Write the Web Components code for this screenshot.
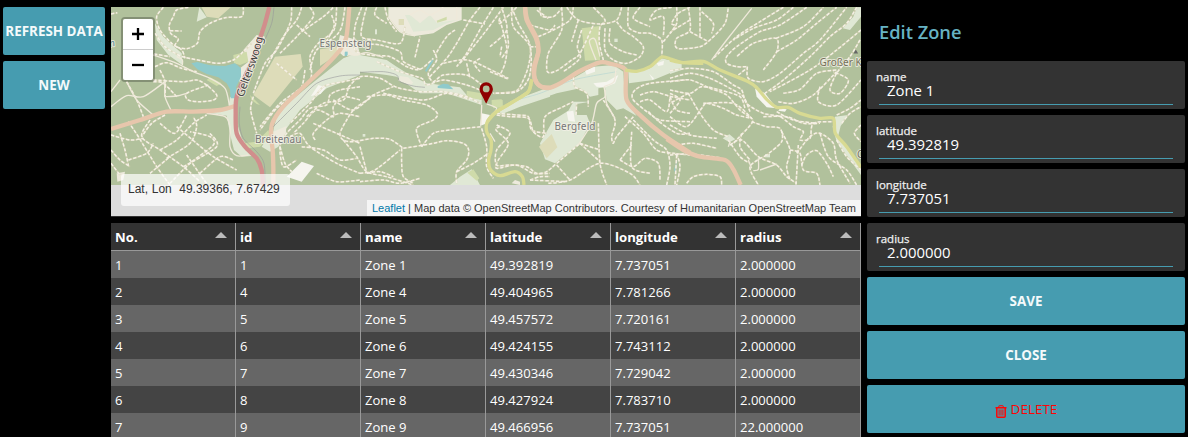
<!DOCTYPE html>
<html lang="en">
<head>
<meta charset="utf-8">
<title>Edit Zone</title>
<style>
html,body{margin:0;height:100%;background:#000;overflow:hidden}
body{font-family:"Open Sans","Noto Sans",sans-serif;color:#fff}
</style>
</head>
<body>
<zone-app></zone-app>
<script>
const define = (name, html, setup) => customElements.define(name, class extends HTMLElement {
  connectedCallback() {
    if (this.shadowRoot) return;
    const t = document.createElement('template');
    t.innerHTML = typeof html === 'function' ? html(this) : html;
    this.attachShadow({mode: 'open'}).append(t.content.cloneNode(true));
    if (setup) setup(this);
  }
});

define('action-button', `<style>
:host{display:block;height:48px}
button{display:flex;align-items:center;justify-content:center;width:100%;height:100%;border:0;padding:0;border-radius:2px;background:#469cb0;color:#f4fafb;font:700 13.4px "Open Sans",sans-serif;white-space:nowrap}
:host([danger]) button{color:#ff0505;font-weight:400;font-size:13.5px}
::slotted(svg){margin:4px 4px 0 0}
</style><button><slot></slot></button>`);

define('form-field', el => `<style>
:host{display:flex;flex-direction:column;box-sizing:border-box;height:48px;background:#333;border-radius:2px;padding:8px 12px 0 9px}
label{font-size:11.5px;line-height:16px;height:13px;color:#f0f0f0;-webkit-text-stroke:.25px #f0f0f0}
.v{margin-left:3px;padding-left:8px;height:22px;line-height:16px;font-size:14.9px;border-bottom:1px solid #469cb0}
</style><label>${el.getAttribute('label')}</label><div class="v">${el.getAttribute('value')}</div>`);

define('form-title', `<style>
:host{display:flex;align-items:center;height:48px;padding-left:12px;font-size:18.3px;font-weight:600;color:#67b3c4}
</style><slot></slot>`);

const ROWS = [
 [1,1,'Zone 1','49.392819','7.737051','2.000000'],[2,4,'Zone 4','49.404965','7.781266','2.000000'],
 [3,5,'Zone 5','49.457572','7.720161','2.000000'],[4,6,'Zone 6','49.424155','7.743112','2.000000'],
 [5,7,'Zone 7','49.430346','7.729042','2.000000'],[6,8,'Zone 8','49.427924','7.783710','2.000000'],
 [7,9,'Zone 9','49.466956','7.737051','22.000000']];
const COLS = ['No.','id','name','latitude','longitude','radius'];

define('zone-table', () => `<style>
:host{display:block}
.r{display:grid;grid-template-columns:repeat(6,125px);height:27px;background:#666}
.r:nth-child(even){background:#444}
.r.h{background:#333;border-bottom:1px solid #999}
.r div{display:flex;align-items:center;justify-content:space-between;border-right:1px solid #999;padding:2px 7px 0 4px;font-size:13.05px;line-height:25px}
.h div{font-weight:700;font-size:13.2px}
i{border:6px solid transparent;border-top:0;border-bottom:6px solid #bbb;margin:-5px 1px 0 0}
</style><div class="r h">${COLS.map(c => `<div>${c}<i></i></div>`).join('')}</div>` +
 ROWS.map(r => `<div class="r">${r.map(c => `<div>${c}</div>`).join('')}</div>`).join(''));

/* Map geometry: one layer per tile column, in thirds of a pixel from the tile origin. */
const curve = p => {
  const n = p.length / 2, at = i => { i = Math.max(0, Math.min(n - 1, i)); return [p[2*i], p[2*i+1]]; };
  let d = `M${p[0]} ${p[1]}`;
  for (let i = 0; i < n - 1; i++) {
    const [a,b,c,e] = [at(i-1), at(i), at(i+1), at(i+2)];
    d += `C${b[0]+(c[0]-a[0])/7} ${b[1]+(c[1]-a[1])/7} ${c[0]-(e[0]-b[0])/7} ${c[1]-(e[1]-b[1])/7} ${c[0]} ${c[1]}`;
  }
  return d;
};
const TILES = [
 {x:110, areas:[
  ['l','M268,22L290,52L260,65Z'],['b','M275,22L362,22L325,55L290,50Z'],['b','M495,170L572,162L578,200L480,322L430,285Z'],
  ['b','M630,148L690,140L680,165L630,198Z'],
  ['l','M750,155L700,175L600,255L540,305L500,350L488,400L530,385L570,330L620,290L650,265L750,225Z'],
  ['l','M290,337L350,347L362,410L372,450L395,470L435,467L395,415L375,350L378,295L360,290L355,325Z'],
  ['l','M135,70L160,110L215,160L217,195L175,165L140,120Z'],
  ['r','M440,105L400,150L415,185L390,205L390,270L430,200L465,110Z'],['g','M370,165L410,155L415,185L390,195L372,190Z'],['g','M300,232L335,250L320,258L290,240Z'],
  ['g','M400,430L440,425L475,390L480,405L450,440L410,445Z'],['l','M455,440L480,400L525,380L530,400L505,440L480,455Z'],['r','M490,395L530,378L525,415L505,435L488,430Z'],
  ['w','M575,485L612,498L575,545L530,530Z'],['w','M603,288L625,255L648,262L632,282Z'],['r','M20,520L45,515L40,540L22,545Z'],['g','M420,285L450,315L440,312L425,300Z'],['r','M690,105L740,120L750,165L700,168L680,150Z'],
  ['a','M244,190L262,186L300,196L345,198L375,190L393,205L393,230L378,262L380,295L362,295L360,268L350,250L325,232L290,222L262,208Z'],['a','M705,155h8v10h-8z']],
  paths:[[3,42,22,38],[160,22,140,50,150,90,185,130,215,150,225,175],[235,22,200,30,190,50,178,75,182,100,205,117,195,138,230,146,262,130,270,95,300,70,345,53,395,50,400,22],[180,92,215,93],
  [135,100,165,140,205,165,225,172,290,185,330,190,370,180,400,155,425,130],[132,162,180,170],[135,200,170,188,215,205,260,215],
  [150,210,165,245,165,290],[130,240,220,245,260,240,290,255,320,285,310,300,270,305,235,300,230,280,295,255],[50,245,80,300,100,350],[130,245,160,250,200,290],
  [3,450,30,480,60,500],[30,400,45,450,55,495],[55,365,85,410,140,500,180,555],[120,360,95,410,150,450,220,500,270,545],[165,345,125,370,95,410],[3,405,60,420,100,415],[55,480,110,460,130,430],[150,450,200,420,250,370,290,345],[170,475,240,430,260,380,250,350],[200,380,260,430,310,470,380,510],[120,520,180,470],[180,550,240,490,310,435,300,410,240,395],[220,500,320,440,300,400],[150,370,195,400,230,345],[230,465,275,530,290,550],[270,520,330,470,370,480],[3,490,30,525],
  [545,22,540,70,500,150,465,190,430,280],[575,22,560,60,520,110,470,200],[600,22,610,50,560,110,510,160],[560,75,600,110],[575,95,640,50,670,22],[680,22,672,90,625,130,600,170,600,240,510,310,450,380],[705,22,695,80,675,110,620,150,600,210],[430,290,422,330,440,400],[500,190,560,240],[585,210,570,270,500,325,450,390],[665,45,672,80,640,140],
  [750,260,690,270,660,285,650,315,600,325,570,360,530,400,510,440,520,500,560,480],[750,235,700,245,640,260,600,310,540,370],[750,300,700,290,670,320,670,350,620,330,580,370,550,400],[610,370,680,400,750,430],[615,420,610,400,650,360,690,340,750,350],[540,410,570,400,600,440,680,490,750,520],[510,440,525,490,545,515],[620,520,680,545,750,540],[575,440,640,450,690,480,740,475]],
  solid:[[3,320,50,287,100,290,165,245],[3,275,30,240],[165,290,200,288,230,280],[50,245,80,300,130,345],[165,245,165,290,185,335],[130,165,200,190,250,215,300,235,345,265,358,315],[290,340,345,350,360,380,360,440,380,467,415,465],[425,130,460,110],[200,170,217,180,217,195]],
  rail:[[492,22,485,70,460,130],[390,320,388,370,400,415,440,455,462,490,466,555],[490,380,560,310,620,250,690,228,750,225]],
  red:[[478,21,465,70,450,115,430,175,405,230,380,290,377,340,380,400,405,440,440,475,455,510,459,555]],
  pri:[[3,387,90,360,170,335,250,335,330,330,375,318],[718,21,714,70,708,115,690,150,640,205,560,280,515,325,487,370,483,410,488,450,490,500,490,555]]},
 {x:300, areas:[['l','M180,165L260,180L290,200L330,225L380,250L480,262L500,285L545,300L545,315L440,280L360,280L290,230L260,225L180,215Z'],
  ['r','M265,22L485,22L485,60L440,75L400,100L345,108L300,95L265,50Z'],['l','M315,45L340,95L400,90L440,70L470,60L410,68L390,45L360,70L330,45Z'],['b','M296,57h16v18h-16z'],['g','M410,62L440,50L440,60L412,68Z'],['l','M225,88h6v15h-6z'],['l','M188,402h8v8h-8z'],
  ['g','M575,300L605,298L608,320L575,320Z'],['g','M500,272L545,280L545,300L500,292Z'],['w','M545,340L570,345L555,372L540,378Z'],['l','M600,325L690,285L750,262L750,290L660,320L600,345Z'],
  ['l','M450,555L480,530L515,508L540,555Z'],['g','M502,518L520,508L538,535L530,542Z'],['r','M300,228L325,232L340,248L330,255L295,242Z'],['a','M413,258L430,251L445,253L460,268L413,264Z'],['a','M375,213L398,172L400,182L380,215Z'],['a','M134,157h7v11h-7z']],
  paths:[[185,22,165,80,165,150,210,165,270,170,320,200,360,208,400,175],[200,22,190,60,185,110,230,120,300,130,315,80],[230,22,225,45,260,70],[180,130,240,135,300,155,310,185,360,208],[255,22,265,60,290,95],[345,172,360,110],[540,22,510,60,470,130,440,175,385,235],[490,60,555,72],[580,22,545,80,500,160,470,200],[400,150,410,180,385,220,400,245,430,225,500,225,550,258],[465,90,440,110,405,165],[610,22,560,90,480,190],[650,22,600,70,600,50],[605,140,600,170],[600,60,620,140,615,190,600,225],[540,175,522,190,540,215],[430,190,480,180,520,185,625,235],[500,190,510,235],[635,22,655,70,690,135,685,200,660,260,640,275,580,280],[690,140,710,140],[745,55,710,30],[145,262,180,230,240,235,290,262,360,275,430,275,500,290,540,310],[230,185,300,215,365,235,380,255,430,240,500,255,540,270],[20,350,70,310,130,300,145,262],[200,290,260,285,310,300,380,315,412,340,400,360,350,385,365,440],[210,295,165,325,140,360,120,400,130,420,160,425,220,415,270,418,310,445],[100,300,160,330,220,285,280,260],[250,280,370,300,440,280,510,298],[180,440,200,515],[130,420,170,470,200,515,260,530,340,555],[180,520,225,510,300,450],[310,445,390,432,440,422,490,430,506,450,500,480,470,515,470,550],[305,445,305,490,310,530,340,550],[365,440,400,400,450,390,545,380],[200,520,240,515,280,530],[180,545,250,540,300,550,360,535],[470,515,520,490,565,460],[600,380,588,390,625,430,595,480,590,505,650,495,700,520,750,520],[590,340,650,345,685,350,695,390,740,400],[545,385,560,440,560,500,580,535],[690,540,720,530,750,530]],
  solid:[[545,315,543,375],[265,50,300,95,345,108],[330,45,360,30,390,45,430,22],[470,22,470,60],[130,130,160,165,200,158,250,172],[560,312,590,325,575,345]],
  rail:[[180,217,250,215,290,225,300,245,340,258,375,262]],
  pri:[[675,21,680,60,708,115,715,155,704,200,704,235,720,258,750,264]],
  yel:[[695,238,685,275,640,305,590,335,562,365,560,395,573,420,573,450,566,480,572,510,600,527,645,515,667,530,672,555]]},
 {x:490, areas:[['l','M30,335L100,290L250,235L310,200L370,195L400,215L405,300L440,348L400,325L380,330L350,300L345,262L325,265L325,285L300,290L270,265L200,280L100,315Z'],
  ['l','M415,215L480,205L515,175L575,190L575,205L490,240L417,250Z'],['g','M275,85L328,78L330,180L285,182Z'],['g','M5,302L38,300L38,322L10,325Z'],
  ['l','M250,305L300,305L260,312L258,345L290,345L300,370L270,430L195,490L165,478L150,430L190,360L235,332Z'],['b','M147,440L185,402L202,442L170,475Z'],
  ['w','M230,335L250,332L255,365L235,362Z'],['w','M285,212L315,200L315,215L290,224Z'],['w','M310,250L350,245L385,225L375,250L345,262L320,260Z'],['w','M478,222L492,235L488,240Z'],['w','M500,190L522,182L520,195L505,198Z'],['l','M373,116h10v10h-10z'],['r','M65,550L75,540L90,545L90,555Z']],
  paths:[[0,140,50,90,35,22],[50,90,55,140,35,175],[0,215,55,237],[65,22,70,80,120,140,118,230,80,275,10,280],[150,22,155,48,190,50,215,25],[120,75,180,90,195,75],[215,22,215,90,175,160,172,215,200,212,245,180,270,160,310,75],[145,110,190,90,240,60,250,22],[230,22,265,60,330,72,380,60,395,22],[265,60,245,125],[275,90,262,140,270,175,220,215],[310,22,345,60,330,80,328,130,340,180],[345,85,345,150,370,180,410,190,450,170,460,140,430,110,400,90,380,65],[360,85,360,130,400,155,440,165],[415,22,415,80,445,98,480,100,515,120,515,170],[450,22,430,55,480,80],[545,22,500,30,480,60,520,50,520,110],[520,125,555,80,545,70,565,40,600,22],[600,60,550,90],
  [585,240,480,250,435,270,430,300,490,350],[450,285,490,275,545,290,600,300],[450,305,480,300,530,335,540,290],[475,335,510,360,600,365],[540,290,560,330,600,340],[600,400,560,400,500,360],[430,360,490,420,530,450,540,500,530,555],[405,350,460,400,500,450,550,460,600,465],[20,345,60,350,115,355,130,395,160,410,165,350,220,320,250,305],[20,375,60,400,20,450,20,495,60,495,110,500,140,520,170,515,200,490,270,430],[270,430,330,450],[325,370,330,490,350,555],[270,430,330,485],[200,495,240,540],[175,550,240,540,330,490,420,520,450,555],[425,395,425,500,480,520],[390,480,425,435],[430,350,380,410,370,430,365,410,375,360,340,300],[390,480,430,500,465,475,505,490,510,540],[120,540,230,545],[560,460,570,500,560,555],[250,230,255,260,290,280,295,320],[258,345,260,310]],
  solid:[[318,180,298,125,315,118,330,170],[265,435,305,370,320,310,345,290,342,260],[345,270,350,310,375,355],[378,205,372,245,342,260],[0,400,15,425],[490,350,515,370]],
  riv:[[60,305,150,280,250,240,380,215]],
  pri:[[105,21,112,60,140,115,145,155,132,200,134,235,150,258,175,264,210,250,270,213,330,187,365,192,400,203,408,220,410,300,455,350,520,405,600,458]],
  yel:[[125,238,115,275,70,305,20,335,-8,365],[405,210,440,214,480,200,515,171,545,178,580,188,640,190]]},
 {x:670, areas:[['w','M255,265L285,280L320,325L290,322L260,290Z'],['w','M330,325L350,328L345,335L325,332Z'],['l','M158,415L178,403L196,418L178,427Z'],['l','M495,350L535,345L512,378L504,410L573,505L573,525L500,425L488,380Z'],['l','M573,22L573,50L540,90L518,85L550,50L560,22Z'],['l','M0,190L30,190L35,210L0,222Z'],['l','M285,462h15v10h-15z'],['a','M20,480L22,485L17,520L12,510Z']],
  paths:[[55,22,60,90,20,115,22,145,90,140,125,115,165,70,175,22],[60,95,115,125],[20,22,20,70,0,100],[90,22,90,110],[95,35,130,70,125,100],[340,22,270,65,200,110,130,175],[410,22,330,75,270,95,200,140,170,170,170,190,200,200,232,200],[370,22,320,60,250,85,190,120],[280,210,320,155,318,115,250,130,200,170],[318,115,400,80,460,22],[320,155,380,120,440,70,500,22],[205,225,230,205],[232,200,235,235,280,245,330,220,400,160,450,120,530,22],[560,22,530,70,480,110,420,170,340,240,285,280],[340,280,390,268,440,220,500,210],[573,90,500,150,420,210,300,275],[570,120,540,170,500,220,480,270,510,280,535,240,490,215],[450,260,445,305,500,315,573,240],[325,305,370,310,430,285,500,215],
  [0,212,60,205,130,215,190,255,215,270,230,310,280,340,330,350,370,380,400,395,390,420,420,415,430,370,490,365],[0,235,60,220,120,235,180,265,220,290,240,335],[0,245,60,240,120,265,170,285,210,330,245,355],[0,270,60,280,95,260,150,270,210,290,225,325],[55,280,90,340,130,390,175,410],[0,280,30,300,0,340],[0,350,50,380,95,325,110,310,160,325,200,345,245,355],[55,280,0,310],[100,310,190,310,240,350,245,370,190,430],[0,375,60,405,140,415],[20,435,70,430,140,445],[245,365,290,380,330,385,335,425,290,465],[180,435,215,420,265,470,320,495,350,530,380,550],[175,420,210,470,240,490],[215,400,210,440,240,480],[290,465,240,500,265,555],[335,395,360,450,350,500,360,540],[360,450,390,460,400,510,440,520,450,555],[395,495,410,465,440,452,470,490,490,530],[385,435,378,555],[380,460,420,410,450,400,490,430,500,480,540,550],[450,400,475,470,530,510,560,555],[280,350,350,350,400,370,450,370],[320,335,370,360,440,370],[500,345,540,325,573,300],[515,370,540,340,573,320],[573,375,553,400,573,425],[50,550,70,530,110,523,150,530,155,555],[20,465,15,555],[0,465,60,462,150,473],[500,420,530,470,573,510]],
  solid:[[125,180,170,120,245,25],[265,475,265,508,250,512],[270,510,320,492],[180,425,175,440],[235,480,245,505]],
  pri:[[-10,417,40,450,90,470,165,480,190,508,212,555]],
  yel:[[0,180,40,188,100,184,150,210,235,245,262,265,290,298,320,322,355,322,390,340,450,355,490,355,496,400,530,440,573,502]]}];
const FILL = {l:'#e0e8d5', b:'#dddcb9', r:'#edeadc', g:'#cfdbaa', w:'#f6f5ef', a:'#8fcacb'};
const lines = (list, cls) => (list || []).map(p => `<path class="${cls}" d="${curve(p)}"/>`).join('');
const layer = fn => TILES.map((t, i) => `<g transform="translate(${t.x-111} -7) scale(.33333)">${fn(t, i)}</g>`).join('');

define('zone-map', () => `<style>
:host{display:grid;grid-template:209px / 750px;background:#ddd;border-bottom:1px solid #333;position:relative;font-family:"Liberation Sans",Arial,sans-serif;overflow:hidden}
svg.map{display:block}
path{fill:none;stroke-linejoin:round;stroke-linecap:butt}
.dc{stroke:#d5d0b0;stroke-width:5.2;opacity:.6}
.d{stroke:#f5f0e5;stroke-width:4.5;stroke-dasharray:10 5.5}
.s{stroke:#efe9da;stroke-width:4}
.rail{stroke:#96969a;stroke-width:2.2;opacity:.8}
.riv{stroke:#b7d6d1;stroke-width:2}
.red{stroke:#d18e8c;stroke-width:13}
.pri{stroke:#e7c6ac;stroke-width:13}
.yel{stroke:#d8da92;stroke-width:10}
text{font-family:"Noto Sans","Open Sans",sans-serif;font-size:10px;fill:#777;stroke:#f4f2e8;stroke-opacity:.75;stroke-width:2px;paint-order:stroke;stroke-linejoin:round}
.zoom{position:absolute;left:10px;top:10px;border:2px solid rgba(0,0,0,.25);border-radius:4px;color:#000}
.zoom div{width:30px;height:30px;background:#fff;display:grid;place-items:center}
.zoom div:first-child{border-bottom:1px solid #ccc;border-radius:2px 2px 0 0}
.zoom div:last-child{border-radius:0 0 2px 2px}
.pos{position:absolute;left:10px;top:167px;width:169px;height:32px;box-sizing:border-box;padding:0 7px;line-height:31px;border-radius:3px;background:rgba(255,255,255,.7);color:#333;font-size:12px;white-space:pre;word-spacing:.4px}
.att{position:absolute;right:0;bottom:0;height:16px;line-height:16px;padding:0 5px;background:rgba(255,255,255,.7);color:#333;font-size:11px;white-space:nowrap}
.att a{color:#0078a8}
</style>
<svg class="map" width="750" height="178" viewBox="0 0 750 178">
<rect width="750" height="178" fill="#b1c19c"/>
${layer(t => t.areas.map(([k, d]) => `<path style="fill:${FILL[k]}" d="${d}"/>`).join(''))}
${layer(t => lines(t.riv,'riv') + lines(t.paths,'dc') + lines(t.paths,'d') + lines(t.solid,'s'))}
${layer(t => lines(t.pri,'pri') + lines(t.yel,'yel') + lines(t.red,'red') + lines(t.rail,'rail'))}
<text x="208.5" y="40" textLength="52">Espensteig</text>
<text x="144" y="136" textLength="46.5">Breitenau</text>
<text x="443.5" y="123" textLength="41">Bergfeld</text>
<text x="708.5" y="59" style="fill:#756f58">Großer K</text>
<text x="746" y="151" style="fill:#756f58">C</text>
<text x="-1" y="40" transform="rotate(-15 0 40)" style="fill:#5c8f9c;font-style:italic">n</text>
<path id="road" d="M132.500 90.500C138 71 147 56 153 26"/>
<text style="fill:#444;font-size:11px"><textPath href="#road" textLength="63">Gelterswoog</textPath></text>
<path style="fill:#666" d="M742.5 46.5l2.300-4 2.300 4z"/>
<path style="fill:#8f0000;fill-rule:evenodd" d="M375.2 75.2a6.700 6.700 0 0 1 6.700 6.700c0 3.300-3.500 7.600-6.200 13.900q-.5 1-1 0c-2.700-6.300-6.200-10.600-6.200-13.900a6.700 6.700 0 0 1 6.700-6.700zm0 3.300a3.400 3.400 0 1 0 0 6.800a3.400 3.400 0 1 0 0-6.800z"/>
</svg>
<div class="zoom"><div><svg width="12" height="12"><path d="M0 6h12M6 0v12" stroke="#000" stroke-width="2.300"/></svg></div><div><svg width="12" height="12"><path d="M0 6h12" stroke="#000" stroke-width="2.300"/></svg></div></div>
<div class="pos">Lat, Lon  49.39366, 7.67429</div>
<div class="att"><a>Leaflet</a> | Map data © OpenStreetMap Contributors. Courtesy of Humanitarian OpenStreetMap Team</div>`);

define('zone-app', `<style>
:host{display:grid;grid-template-columns:102px 750px 318px;gap:6px;padding:7px 3px 0;height:430px;align-items:start}
.col{display:grid;gap:6px}
</style>
<div class="col"><action-button>REFRESH DATA</action-button><action-button>NEW</action-button></div>
<div class="col"><zone-map></zone-map><zone-table></zone-table></div>
<div class="col"><form-title>Edit Zone</form-title>
<form-field label="name" value="Zone 1"></form-field>
<form-field label="latitude" value="49.392819"></form-field>
<form-field label="longitude" value="7.737051"></form-field>
<form-field label="radius" value="2.000000"></form-field>
<action-button>SAVE</action-button><action-button>CLOSE</action-button>
<action-button danger><svg width="12" height="13" viewBox="0 0 12 13" fill="none" stroke="#ff0505"><path stroke-width="1.5" d="M.5 2.8h11M1.8 3v8.2q0 1 1 1h6.400q1 0 1-1V3"/><path d="M3.800 2.500V1.200q0-.5.5-.5h3.400q.5 0 .5.500v1.300M4.100 4.500v6M6 4.500v6M7.900 4.500v6"/></svg>DELETE</action-button></div>`);
</script>
</body>
</html>
